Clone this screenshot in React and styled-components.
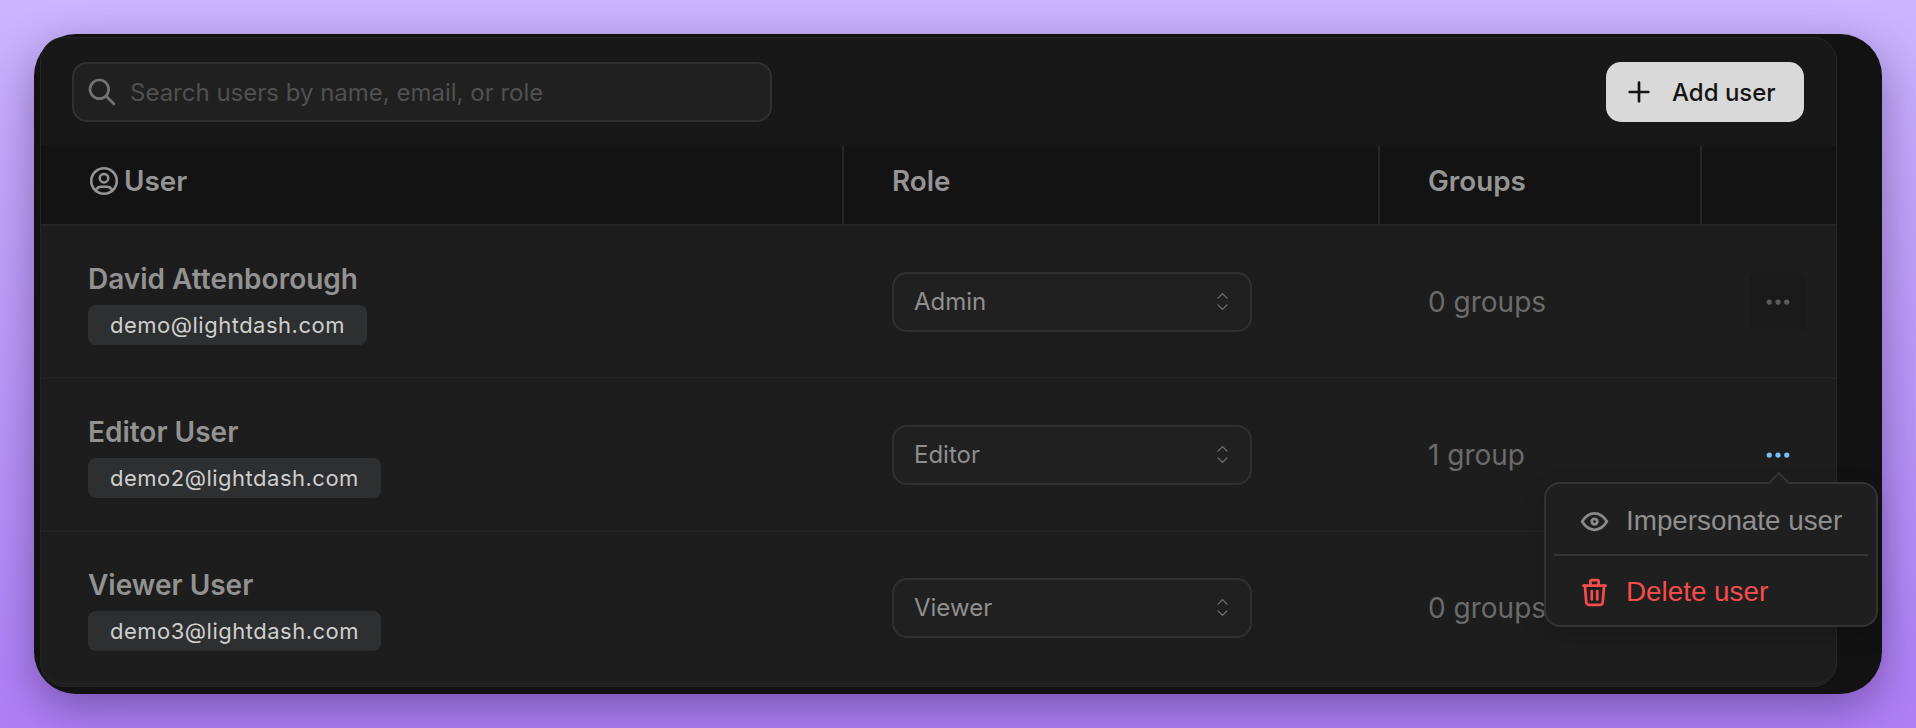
import React from 'react';
import styled, { createGlobalStyle } from 'styled-components';
import { TbSearch, TbPlus, TbUserCircle, TbSelector, TbDots, TbEye, TbTrash } from 'react-icons/tb';

const users = [
  { name: 'David Attenborough', email: 'demo@lightdash.com', role: 'Admin', groups: '0 groups' },
  { name: 'Editor User', email: 'demo2@lightdash.com', role: 'Editor', groups: '1 group', open: true },
  { name: 'Viewer User', email: 'demo3@lightdash.com', role: 'Viewer', groups: '0 groups' },
];

function App() {
  return (
    <>
      <GlobalStyle />
      <Frame>
        <Card>
          <Toolbar>
            <Search>
              <TbSearch size={32} strokeWidth={2} />
              <span>Search users by name, email, or role</span>
            </Search>
            <AddButton>
              <TbPlus size={32} strokeWidth={2} />
              Add user
            </AddButton>
          </Toolbar>
          <HeaderRow>
            <HeaderCell $first>
              <TbUserCircle size={34} strokeWidth={1.8} />
              User
            </HeaderCell>
            <HeaderCell>Role</HeaderCell>
            <HeaderCell>Groups</HeaderCell>
            <HeaderCell />
          </HeaderRow>
          {users.map((user, i) => (
            <Row key={user.email} $last={i === users.length - 1}>
              <UserCell>
                <Name>{user.name}</Name>
                <Email>{user.email}</Email>
              </UserCell>
              <Cell>
                <Select>
                  {user.role}
                  <TbSelector size={27} strokeWidth={1.2} />
                </Select>
              </Cell>
              <Cell>
                <GroupCount>{user.groups}</GroupCount>
              </Cell>
              <ActionCell>
                <MoreButton $hover={i === 0} $open={user.open}>
                  <TbDots size={30} strokeWidth={2.2} />
                </MoreButton>
                {user.open && (
                  <Menu>
                    <MenuItem>
                      <TbEye size={33} strokeWidth={2} />
                      Impersonate user
                    </MenuItem>
                    <MenuDivider />
                    <MenuItem $danger>
                      <TbTrash size={33} strokeWidth={2} />
                      Delete user
                    </MenuItem>
                  </Menu>
                )}
              </ActionCell>
            </Row>
          ))}
        </Card>
      </Frame>
    </>
  );
}

export default App;

const GlobalStyle = createGlobalStyle`
  html, body {
    margin: 0;
    height: 100%;
  }

  body {
    background: linear-gradient(180deg, #ccb6fe 0%, #c3a8fb 20%, #af7ef5 100%);
    font-family: Inter, 'Noto Sans', sans-serif;
    overflow: hidden;
  }
`;

const Frame = styled.div`
  box-sizing: border-box;
  width: 1848px;
  height: 660px;
  margin: 34px 0 0 34px;
  padding: 3px 0 0 6px;
  background: #121212;
  border-radius: 42px;
  box-shadow: 0 14px 44px rgba(30, 10, 60, 0.38);
`;

const Card = styled.div`
  box-sizing: border-box;
  width: 1797px;
  height: 650px;
  background: #1d1d1d;
  border: 1px solid #262626;
  border-radius: 24px;
`;

const Toolbar = styled.div`
  display: flex;
  align-items: center;
  justify-content: space-between;
  box-sizing: border-box;
  height: 108px;
  padding: 0 32px 0 31px;
  background: #181818;
  border-radius: 24px 24px 0 0;
`;

const Search = styled.div`
  display: flex;
  align-items: center;
  gap: 12px;
  box-sizing: border-box;
  width: 700px;
  height: 60px;
  padding: 0 12px;
  background: #202020;
  border: 2px solid #303030;
  border-radius: 15px;
  color: #505050;
  font-size: 24px;

  svg {
    color: #737373;
    flex-shrink: 0;
  }
`;

const AddButton = styled.button`
  display: flex;
  align-items: center;
  gap: 17px;
  box-sizing: border-box;
  width: 198px;
  height: 60px;
  padding: 0 0 0 17px;
  background: #d9d9d9;
  border: none;
  border-radius: 15px;
  color: #141414;
  font-family: inherit;
  font-size: 24px;
  font-weight: 500;
`;

const columns = `
  display: grid;
  grid-template-columns: 803px 536px 322px 1fr;
`;

const HeaderRow = styled.div`
  ${columns}
  height: 78px;
  background: #131313;
  border-bottom: 2px solid #262626;
`;

const HeaderCell = styled.div`
  display: flex;
  align-items: center;
  gap: 3px;
  box-sizing: border-box;
  padding-left: ${(p) => (p.$first ? '46px' : '48px')};
  padding-bottom: 8px;
  border-right: 2px solid #262626;
  color: #959595;
  font-size: 27.8px;
  font-weight: 600;

  &:last-child {
    border-right: none;
  }
`;

const Row = styled.div`
  ${columns}
  height: 153px;
  box-sizing: border-box;
  border-bottom: 2px solid #232323;
  border-radius: ${(p) => (p.$last ? '0 0 24px 24px' : '0')};
`;

const Cell = styled.div`
  display: flex;
  align-items: center;
  padding-left: 48px;
`;

const UserCell = styled.div`
  display: flex;
  flex-direction: column;
  align-items: flex-start;
  justify-content: center;
  gap: 9px;
  padding: 4px 0 0 47px;
`;

const Name = styled.div`
  color: #929292;
  font-size: 28px;
  font-weight: 600;
  line-height: 34px;
`;

const Email = styled.div`
  box-sizing: border-box;
  height: 40px;
  padding: 0 22px;
  background: #2e2f31;
  border-radius: 8px;
  color: #cfcfcf;
  font-size: 22px;
  letter-spacing: 0.5px;
  line-height: 40px;
`;

const Select = styled.div`
  display: flex;
  align-items: center;
  justify-content: space-between;
  box-sizing: border-box;
  width: 360px;
  height: 60px;
  padding: 0 14px 0 20px;
  background: #202020;
  border: 2px solid #303030;
  border-radius: 15px;
  color: #8f8f8f;
  font-size: 24px;

  svg {
    color: #707070;
  }
`;

const GroupCount = styled.div`
  color: #6b6b6b;
  font-size: 28px;
`;

const ActionCell = styled.div`
  position: relative;
  display: flex;
  align-items: center;
  padding-left: 48px;
`;

const MoreButton = styled.div`
  display: flex;
  align-items: center;
  justify-content: center;
  width: 56px;
  height: 56px;
  border-radius: 6px;
  background: ${(p) => (p.$hover ? '#1a1a1a' : 'transparent')};
  color: ${(p) => (p.$open ? '#74c0fc' : '#5c5c5c')};
`;

const Menu = styled.div`
  position: absolute;
  top: 103px;
  right: -42px;
  z-index: 2;
  box-sizing: border-box;
  width: 334px;
  height: 145px;
  padding: 4px 8px;
  background: #1f1f1f;
  border: 2px solid #343434;
  border-radius: 16px;
  box-shadow: 0 8px 24px rgba(0, 0, 0, 0.15);

  &::before {
    content: '';
    position: absolute;
    top: -9px;
    left: 225px;
    width: 14px;
    height: 14px;
    background: #1f1f1f;
    border-top: 2px solid #343434;
    border-left: 2px solid #343434;
    transform: rotate(45deg);
  }
`;

const MenuItem = styled.div`
  display: flex;
  align-items: center;
  gap: 15px;
  height: ${(p) => (p.$danger ? '62px' : '66px')};
  padding-top: ${(p) => (p.$danger ? '5px' : '0')};
  padding-left: 24px;
  color: ${(p) => (p.$danger ? '#f84c4c' : '#8f8f8f')};
  font-family: 'Liberation Sans', Arial, sans-serif;
  font-size: 27.8px;

  svg {
    color: ${(p) => (p.$danger ? '#f84c4c' : '#8a8a8a')};
    flex-shrink: 0;
  }
`;

const MenuDivider = styled.div`
  height: 2px;
  background: #343434;
`;
